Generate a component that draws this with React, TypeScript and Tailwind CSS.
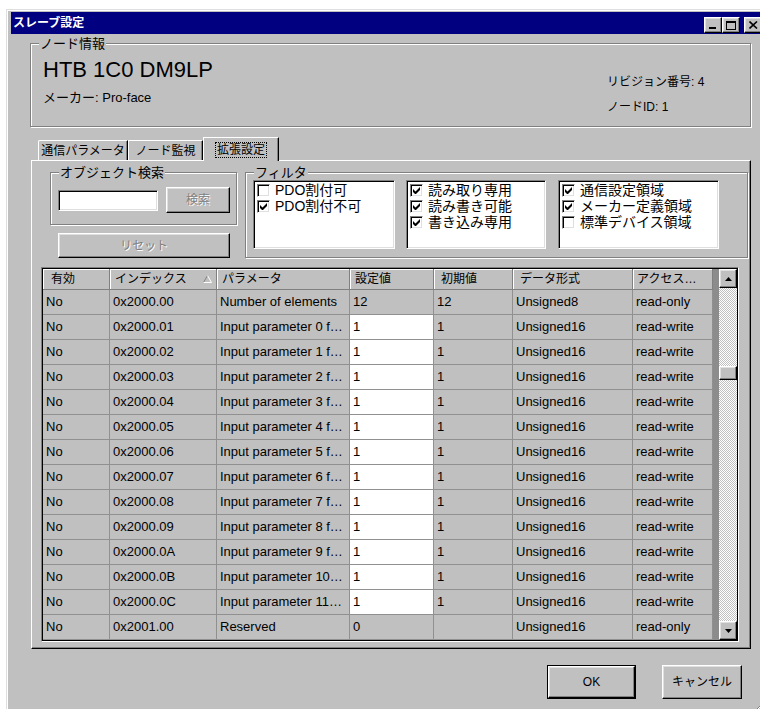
import type { ReactNode } from "react";

const RAISED =
  "bg-[#c0c0c0] border border-t-white border-l-white border-r-black border-b-black shadow-[inset_-1px_-1px_0_#808080,inset_1px_1px_0_#dfdfdf]";
const SUNKEN =
  "border border-t-[#808080] border-l-[#808080] border-r-white border-b-white shadow-[inset_1px_1px_0_#000,inset_-1px_-1px_0_#dfdfdf]";
const ETCHED = "border border-[#808080] shadow-[inset_1px_1px_0_#fff,1px_1px_0_#fff]";
const DISABLED = "text-[#808080] [text-shadow:1px_1px_0_#fff]";

const COLS = [
  { label: "有効", w: "w-[67px]", pl: "pl-[8px]" },
  { label: "インデックス", w: "w-[107px]", pl: "pl-[5px]", sort: true },
  { label: "パラメータ", w: "w-[133px]", pl: "pl-[5px]" },
  { label: "設定値", w: "w-[84px]", pl: "pl-[5px]" },
  { label: "初期値", w: "w-[79px]", pl: "pl-[7px]" },
  { label: "データ形式", w: "w-[120px]", pl: "pl-[7px]" },
  { label: "アクセス…", w: "w-[80px]", pl: "pl-[4px]" },
];

type Row = { idx: string; name: string; val: string; init: string; type: string; access: string; edit: boolean };

const ROWS: Row[] = [
  { idx: "0x2000.00", name: "Number of elements", val: "12", init: "12", type: "Unsigned8", access: "read-only", edit: false },
  ...Array.from({ length: 12 }, (_, i) => ({
    idx: "0x2000." + (i + 1).toString(16).toUpperCase().padStart(2, "0"),
    name: i < 10 ? `Input parameter ${i} f…` : `Input parameter ${i}…`,
    val: "1",
    init: "1",
    type: "Unsigned16",
    access: "read-write",
    edit: true,
  })),
  { idx: "0x2001.00", name: "Reserved", val: "0", init: "", type: "Unsigned16", access: "read-only", edit: false },
];

function Group({ label, className, children }: { label: string; className?: string; children: ReactNode }) {
  return (
    <fieldset className={`${ETCHED} ${className ?? ""}`}>
      <legend className="ml-[8px] px-[1px] bg-[#c0c0c0] text-[13px] leading-[13px]">{label}</legend>
      {children}
    </fieldset>
  );
}

function Check({ on }: { on: boolean }) {
  return (
    <div className={`w-[13px] h-[13px] bg-white ${SUNKEN} flex items-center justify-center shrink-0`}>
      {on && (
        <svg width="7" height="7" viewBox="0 0 7 7">
          <path d="M0 2v3l2 2h1l4-4V0L2.5 4.5z" fill="#000" />
        </svg>
      )}
    </div>
  );
}

function CheckList({ items, className }: { items: [string, boolean][]; className: string }) {
  return (
    <div className={`h-[69px] bg-white ${SUNKEN} ${className} pl-[3px] pt-[1px]`}>
      {items.map(([t, on]) => (
        <div key={t} className="h-[16px] flex items-center gap-[5px] text-[14px] leading-[16px]">
          <Check on={on} />
          <span>{t}</span>
        </div>
      ))}
    </div>
  );
}

function Arrow({ up }: { up: boolean }) {
  return (
    <svg width="7" height="4" viewBox="0 0 7 4">
      <polygon points={up ? "3.5,0 7,4 0,4" : "0,0 7,0 3.5,4"} fill="#000" />
    </svg>
  );
}

function TitleBar() {
  return (
    <div className="w-[752px] h-[22px] bg-[#000080] flex items-start justify-between pl-[2px] pr-[1px]">
      <span className="text-white text-[12px] leading-[22px] font-bold">スレーブ設定</span>
      <div className="flex pt-[5px]">
        <div className={`w-[18px] h-[16px] ${RAISED} relative`}>
          <div className="absolute left-[4px] top-[9px] w-[7px] h-[2px] bg-black" />
        </div>
        <div className={`w-[18px] h-[16px] ${RAISED} flex items-center justify-center`}>
          <div className="w-[10px] h-[9px] border border-black border-t-2" />
        </div>
        <div className={`ml-[4px] w-[18px] h-[16px] ${RAISED} flex items-center justify-center`}>
          <svg width="9" height="8" viewBox="0 0 9 8">
            <path d="M0.5 0.5L8 7.5M8 0.5L0.5 7.5" stroke="#000" strokeWidth="1.6" />
          </svg>
        </div>
      </div>
    </div>
  );
}

function Table() {
  return (
    <div className="ml-[9px] mt-[9px] w-[698px] border border-[#808080] border-r-white border-b-white">
      <div className="border border-black flex">
        <div className="w-[670px]">
          <div className="flex h-[21px]">
            {COLS.map((c) => (
              <div
                key={c.label}
                className={`${c.w} ${c.pl} pr-[4px] flex items-center justify-between text-[12px] border-r border-b border-[#808080] shadow-[inset_1px_1px_0_#fff]`}
              >
                <span>{c.label}</span>
                {c.sort && (
                  <svg width="9" height="8" viewBox="0 0 9 8">
                    <path d="M4.5 0.5L0.5 7.5" stroke="#808080" />
                    <path d="M4.5 0.5L8.5 7.5M0.5 7.5H8.5" stroke="#fff" />
                  </svg>
                )}
              </div>
            ))}
          </div>
          {ROWS.map((r) => {
            const cells = ["No", r.idx, r.name, r.val, r.init, r.type, r.access];
            return (
              <div key={r.idx} className="flex h-[25px]">
                {cells.map((v, i) => (
                  <div
                    key={i}
                    className={`${COLS[i].w} pl-[3px] flex items-center whitespace-nowrap overflow-hidden text-[13px] border-r border-b border-[#909090] ${
                      i === 3 && r.edit ? "bg-white" : ""
                    }`}
                  >
                    {v}
                  </div>
                ))}
              </div>
            );
          })}
        </div>
        <div className="w-[6px] bg-[#8c8c8c]" />
        {/* vertical scroll bar */}
        <div className="w-[18px] flex flex-col">
          <div className={`h-[19px] ${RAISED} flex items-center justify-center`}>
            <Arrow up />
          </div>
          <div className="flex-1 flex flex-col bg-[repeating-conic-gradient(#c0c0c0_0_25%,#ffffff_0_50%)] bg-[length:2px_2px]">
            <div className="h-[78px]" />
            <div className={`h-[14px] ${RAISED}`} />
          </div>
          <div className={`h-[19px] ${RAISED} flex items-center justify-center`}>
            <Arrow up={false} />
          </div>
        </div>
      </div>
    </div>
  );
}

export default function App() {
  return (
    <div className="w-[760px] h-[709px] overflow-hidden bg-white pl-[6px] pt-[9px] font-['Liberation_Sans','Noto_Sans_CJK_JP',sans-serif] text-black">
      <div className="w-[770px] h-[720px] bg-[#c0c0c0] border-l border-t border-[#dfdfdf] shadow-[inset_1px_1px_0_#fff] pl-[4px] pt-[2px]">
        <TitleBar />

        <div className="w-[750px] pl-[19px] pr-[10px]">
          {/* node info */}
          <Group label="ノード情報" className="mt-[3px]">
            <div className="flex justify-between pl-[12px] pt-[9px] pb-[11px]">
              <div>
                <div className="text-[22px] leading-[22px]">HTB 1C0 DM9LP</div>
                <div className="mt-[9px] text-[13px] leading-[16px]">メーカー: Pro-face</div>
              </div>
              <div className="w-[143px] pt-[15px] text-[12px] leading-[16px]">
                <div>リビジョン番号: 4</div>
                <div className="mt-[9px]">ノードID: 1</div>
              </div>
            </div>
          </Group>

          {/* tabs */}
          <div className="ml-[1px] mt-[10px] h-[23px] pl-[7px] flex items-end text-[12px]">
            <div className="w-[90px] h-[20px] flex items-center justify-center border-t border-l border-white border-r border-r-black shadow-[inset_-1px_0_0_#808080] rounded-tl-[2px]">
              通信パラメータ
            </div>
            <div className="w-[75px] h-[20px] flex items-center justify-center border-t border-l border-white border-r border-r-black shadow-[inset_-1px_0_0_#808080]">
              ノード監視
            </div>
            <div className="relative z-10 -mb-[1px] w-[76px] h-[24px] bg-[#c0c0c0] flex items-center justify-center border-t border-l border-white border-r border-r-black shadow-[inset_-1px_0_0_#808080]">
              <span className="border border-dotted border-black px-[1px] leading-[14px]">拡張設定</span>
            </div>
          </div>

          <div className="ml-[1px] w-[720px] border border-t-white border-l-white border-r-black border-b-black shadow-[inset_-1px_-1px_0_#808080] pt-[5px] pb-[6px]">
            <div className="flex items-start gap-[8px] pl-[18px]">
              <div className="w-[187px]">
                <Group label="オブジェクト検索">
                  <div className="flex items-center gap-[8px] pl-[7px] pt-[8px] pb-[11px]">
                    <div className={`w-[100px] h-[21px] bg-white ${SUNKEN}`} />
                    <div className={`w-[64px] h-[26px] ${RAISED} flex items-center justify-center text-[12px] ${DISABLED}`}>
                      検索
                    </div>
                  </div>
                </Group>
                <div className={`ml-[8px] mt-[8px] w-[172px] h-[25px] ${RAISED} flex items-center justify-center text-[12px] ${DISABLED}`}>
                  リセット
                </div>
              </div>

              <Group label="フィルタ" className="w-[503px]">
                <div className="flex pl-[7px] pt-[1px] pb-[8px]">
                  <CheckList className="w-[142px]" items={[["PDO割付可", false], ["PDO割付不可", true]]} />
                  <CheckList
                    className="ml-[11px] w-[140px]"
                    items={[["読み取り専用", true], ["読み書き可能", true], ["書き込み専用", true]]}
                  />
                  <CheckList
                    className="ml-[12px] w-[161px]"
                    items={[["通信設定領域", true], ["メーカー定義領域", true], ["標準デバイス領域", false]]}
                  />
                </div>
              </Group>
            </div>

            <Table />
          </div>

          {/* dialog buttons */}
          <div className="mt-[16px] flex justify-end pr-[9px] text-[12px]">
            <div className="w-[89px] h-[34px] border border-black">
              <div className={`w-full h-full ${RAISED} flex items-center justify-center`}>OK</div>
            </div>
            <div className={`ml-[26px] w-[80px] h-[34px] ${RAISED} flex items-center justify-center`}>キャンセル</div>
          </div>
          <div className="flex justify-end mt-[5px] -mr-[10px]">
            <svg width="14" height="14" viewBox="0 0 14 14">
              <path d="M13 2L2 13M13 6L6 13M13 10L10 13" stroke="#808080" />
              <path d="M13 3L3 13M13 7L7 13M13 11L11 13" stroke="#fff" />
            </svg>
          </div>
        </div>
      </div>
    </div>
  );
}
